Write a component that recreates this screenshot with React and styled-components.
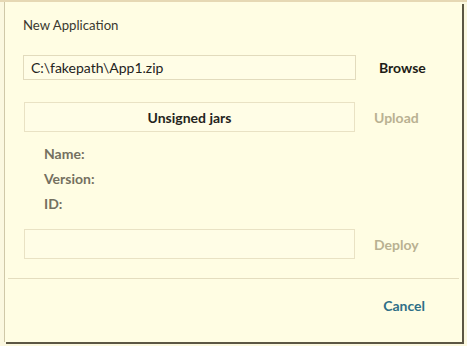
import React from "react";
import styled, { createGlobalStyle } from "styled-components";

const Global = createGlobalStyle`
  html, body { margin: 0; padding: 0; }
  body {
    width: 467px;
    height: 346px;
    overflow: hidden;
    background: #fbf8e0;
    border-top: 2px solid #e6d8b4;
    box-sizing: border-box;
    font-family: Lato, "Liberation Sans", sans-serif;
  }
`;

const Dialog = styled.div`
  margin-left: 4px;
  width: 458px;
  height: 340px;
  box-sizing: border-box;
  background: #fffde3;
  border-left: 1px solid #cfc8a8;
  box-shadow: 2px 2px 0 #5b5644;
  display: flex;
  flex-direction: column;
`;

const Content = styled.div`
  padding: 13px 0 0 18px;
  display: flex;
  flex-direction: column;
`;

const Title = styled.div`
  font-size: 13.2px;
  line-height: 20px;
  color: #3a3930;
`;

const Row = styled.div`
  display: grid;
  grid-template-columns: 333px auto;
  align-items: center;
  margin-top: ${(p) => p.$top}px;
  height: ${(p) => p.$h}px;
`;

const Field = styled.div`
  height: 100%;
  box-sizing: border-box;
  border: 1px solid ${(p) => (p.$strong ? "#e2dbbd" : "#e9e2c4")};
  background: #fffde6;
  display: flex;
  align-items: center;
  justify-content: ${(p) => (p.$center ? "center" : "flex-start")};
  padding-left: ${(p) => (p.$center ? 0 : 7)}px;
  font-size: 14px;
  font-weight: ${(p) => (p.$center ? 700 : 400)};
  color: #24231c;
  margin-left: ${(p) => p.$inset || 0}px;
  margin-right: ${(p) => p.$inset || 0}px;
`;

const Action = styled.span`
  padding-left: ${(p) => p.$pad}px;
  font-size: 14px;
  font-weight: 700;
  color: ${(p) => (p.$disabled ? "#b9b192" : "#1d1c17")};
`;

const Info = styled.div`
  margin-top: 9px;
  padding-left: 21px;
  display: flex;
  flex-direction: column;
`;

const InfoLine = styled.div`
  height: 25px;
  line-height: 25px;
  font-size: 14px;
  font-weight: 700;
  color: #747060;
`;

const Footer = styled.div`
  margin: 19px 3px 0 3px;
  border-top: 1px solid #e4ddbf;
  padding: 17px 34px 0 0;
  display: flex;
  justify-content: flex-end;
`;

const Cancel = styled.span`
  font-size: 14px;
  line-height: 20px;
  font-weight: 700;
  color: #2f6f87;
`;

export default function App() {
  return (
    <>
      <Global />
      <Dialog>
        <Content>
          <Title>New Application</Title>
          <Row $top={20} $h={25}>
            <Field $strong>C:\fakepath\App1.zip</Field>
            <Action $pad={23}>Browse</Action>
          </Row>
          <Row $top={22} $h={30}>
            <Field $center $inset={1}>Unsigned jars</Field>
            <Action $pad={18} $disabled>Upload</Action>
          </Row>
          <Info>
            <InfoLine>Name:</InfoLine>
            <InfoLine>Version:</InfoLine>
            <InfoLine>ID:</InfoLine>
          </Info>
          <Row $top={13} $h={30}>
            <Field $inset={1} />
            <Action $pad={18} $disabled>Deploy</Action>
          </Row>
        </Content>
        <Footer>
          <Cancel>Cancel</Cancel>
        </Footer>
      </Dialog>
    </>
  );
}
